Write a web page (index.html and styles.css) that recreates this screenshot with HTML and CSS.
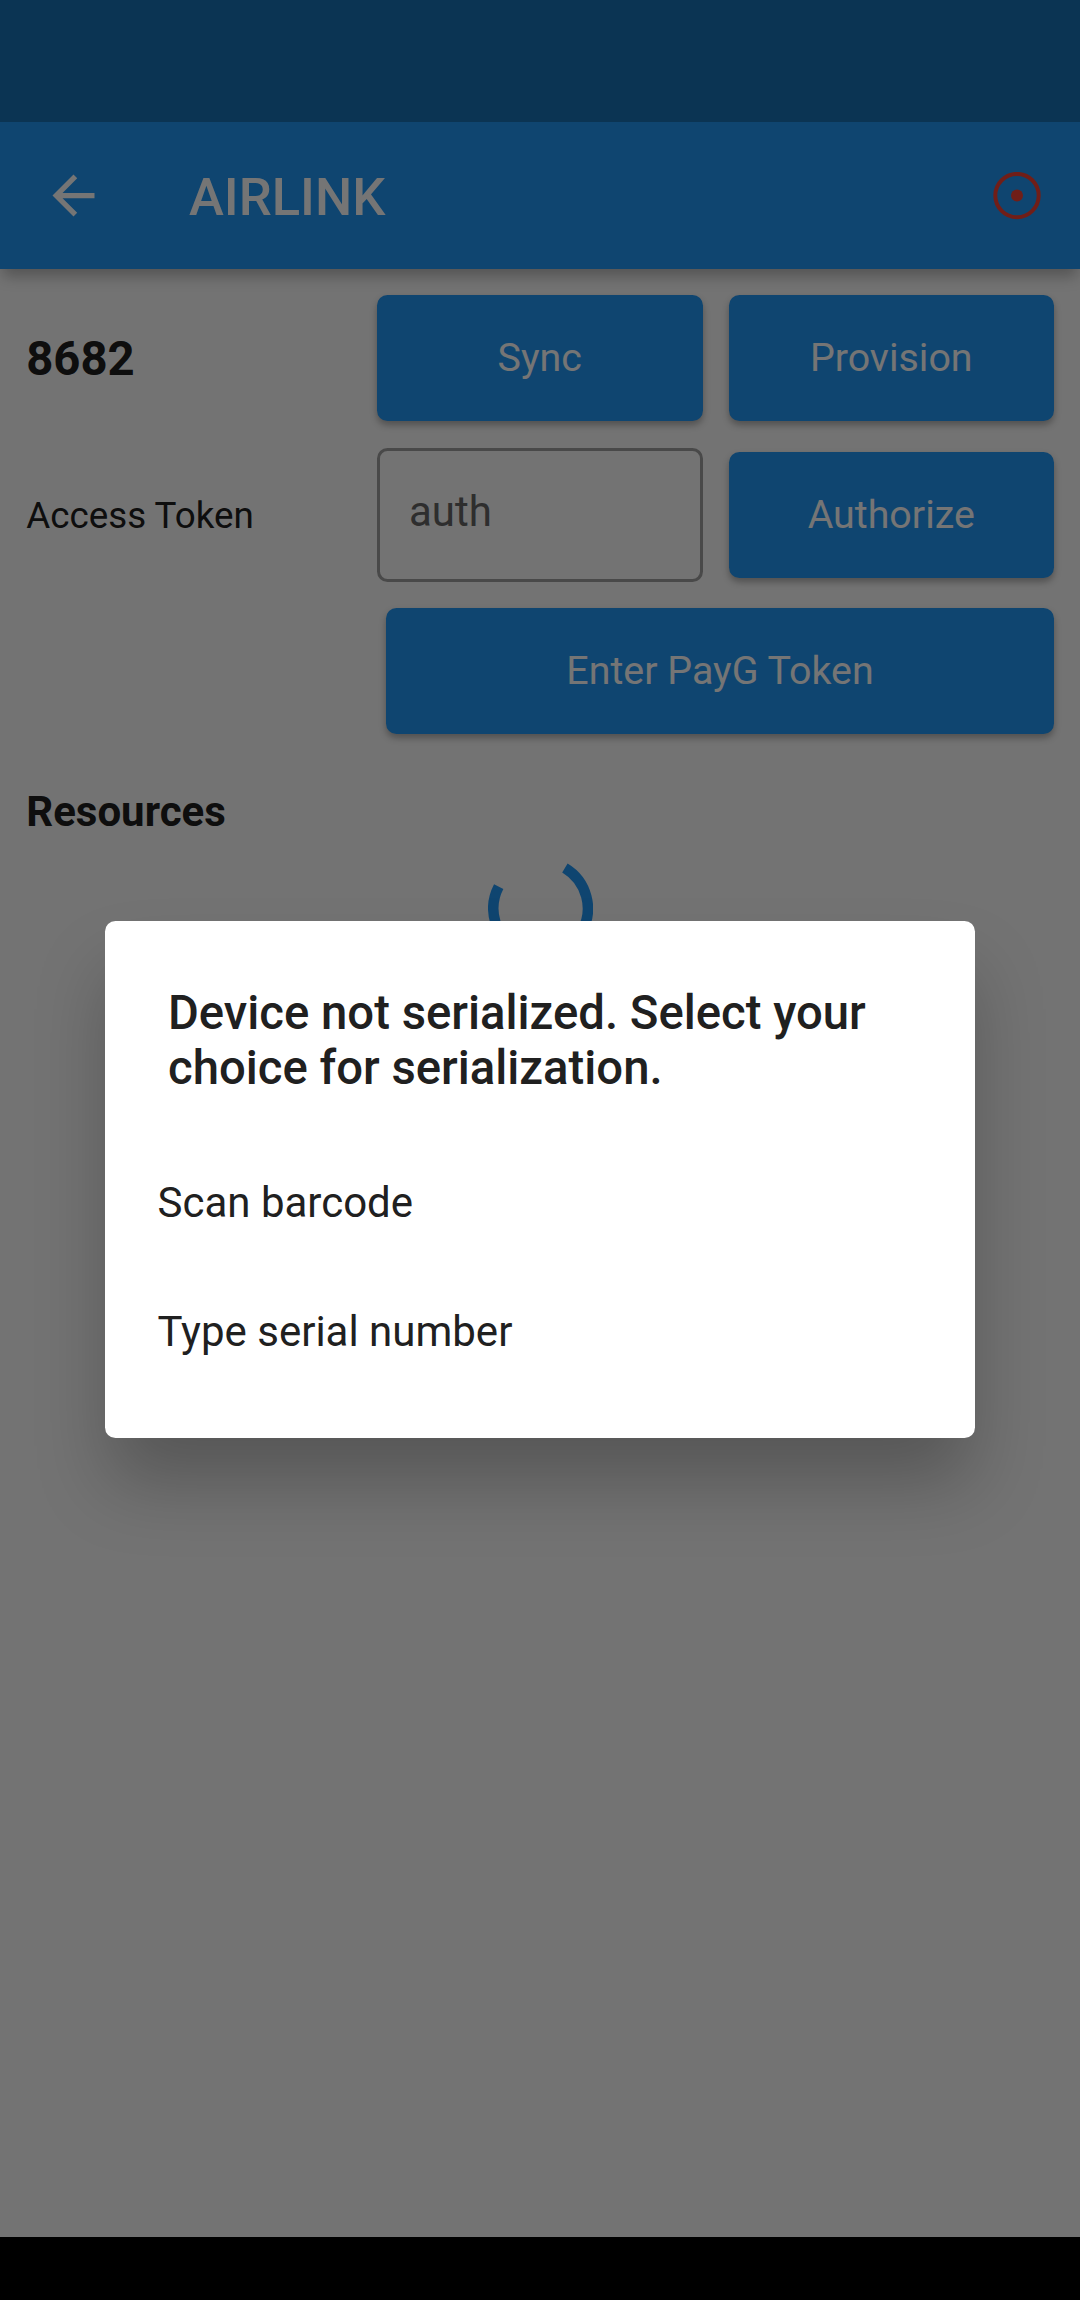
FILE: index.html
```html
<!DOCTYPE html>
<html lang="en">
<head>
<meta charset="utf-8">
<title>AIRLINK</title>
<link rel="stylesheet" href="styles.css">
</head>
<body>
<div class="screen">
  <div class="status-bar"></div>
  <header class="app-bar">
    <svg class="back-icon" viewBox="0 0 24 24"><path d="M20 11H7.83l5.59-5.59L12 4l-8 8 8 8 1.41-1.41L7.83 13H20v-2z"/></svg>
    <h1 class="app-title">AIRLINK</h1>
    <svg class="status-icon" viewBox="0 0 48 48"><circle class="ring" cx="24" cy="23.6" r="21.7"/><circle class="dot" cx="24" cy="23.6" r="6"/></svg>
  </header>
  <main class="content">
    <div class="row row-thirds">
      <span class="device-id">8682</span>
      <button class="button">Sync</button>
      <button class="button">Provision</button>
    </div>
    <div class="row row-thirds">
      <span class="label">Access Token</span>
      <div class="field">auth</div>
      <button class="button">Authorize</button>
    </div>
    <div class="row row-payg">
      <button class="button payg">Enter PayG Token</button>
    </div>
    <h2 class="section-title">Resources</h2>
    <svg class="spinner" viewBox="0 0 105 105"><path d="M76.9 11.9A47.25 47.25 0 1 1 10.7 30.6"/></svg>
  </main>
  <div class="nav-bar"></div>
</div>
<div class="scrim">
  <section class="dialog">
    <h2 class="dialog-title">Device not serialized. Select your choice for serialization.</h2>
    <div class="option">Scan barcode</div>
    <div class="option">Type serial number</div>
  </section>
</div>
</body>
</html>
```
FILE: styles.css
```css
* {
  box-sizing: border-box;
}

body {
  margin: 0;
  font-family: Roboto, sans-serif;
  color: #202020;
  background: #fafafa;
}

h1, h2 {
  margin: 0;
}

.screen {
  display: flex;
  flex-direction: column;
  height: 2300px;
  background: #fafafa;
}

.status-bar {
  position: relative;
  height: 122px;
  background: #1971b6;
}

.app-bar {
  display: flex;
  align-items: center;
  height: 147px;
  padding: 0 39px 0 42px;
  background: #2196f3;
  box-shadow: 0 10px 14px -3px rgba(0, 0, 0, .28);
}

.back-icon {
  width: 63px;
  height: 63px;
  fill: #fff;
}

.app-title {
  flex: 1;
  margin-left: 84px;
  padding-top: 3px;
  font-size: 52.5px;
  line-height: 62px;
  font-weight: 500;
  color: #fff;
}

.status-icon {
  width: 48px;
  height: 48px;
}

.ring {
  fill: none;
  stroke: #f44336;
  stroke-width: 4;
}

.dot {
  fill: #f44336;
}

.content {
  flex: 1;
  display: flex;
  flex-direction: column;
  gap: 26.25px;
  padding: 26.25px;
}

.row {
  display: grid;
  gap: 26.25px;
  align-items: center;
}

.row-thirds {
  grid-template-columns: 324.5px 325.5px 1fr;
}

.row-payg {
  grid-template-columns: 1fr 667.5px;
}

.payg {
  grid-column: 2;
}

.device-id {
  padding-top: 2px;
  font-size: 47.25px;
  line-height: 56px;
  font-weight: 700;
}

.label {
  padding-top: 3px;
  font-size: 36.75px;
  line-height: 44px;
}

.button {
  height: 126px;
  padding: 0;
  border: 0;
  border-radius: 10.5px;
  background: #2196f3;
  color: #fff;
  font-family: inherit;
  font-size: 39.375px;
  line-height: 46px;
  box-shadow: 0 4px 7px rgba(0, 0, 0, .3);
}

.field {
  height: 134px;
  padding: 36px 29px;
  border: 3px solid #a0a0a0;
  border-radius: 10.5px;
  font-size: 42px;
  line-height: 50px;
  color: #646464;
}

.section-title {
  margin-top: 26.5px;
  font-size: 42px;
  line-height: 50px;
  font-weight: 700;
}

.spinner {
  align-self: center;
  width: 105px;
  height: 105px;
  margin: -7px 0 0;
}

.spinner path {
  fill: none;
  stroke: #2196f3;
  stroke-width: 10.5;
}

.nav-bar {
  height: 63px;
  background: #000;
}

.scrim {
  position: absolute;
  inset: 0;
  height: 2300px;
  padding: 122px 0 63px;
  display: flex;
  align-items: center;
  justify-content: center;
  background: rgba(0, 0, 0, .54);
}

.dialog {
  width: 870px;
  height: 517px;
  padding: 65px 52.5px 0;
  border-radius: 10.5px;
  background: #fff;
  box-shadow: 0 48px 72px -5px rgba(0, 0, 0, .25);
}

.dialog-title {
  padding: 0 10.5px;
  margin-bottom: 42px;
  font-size: 47.25px;
  line-height: 55px;
  font-weight: 500;
}

.option {
  font-size: 42px;
  line-height: 129px;
}
```
